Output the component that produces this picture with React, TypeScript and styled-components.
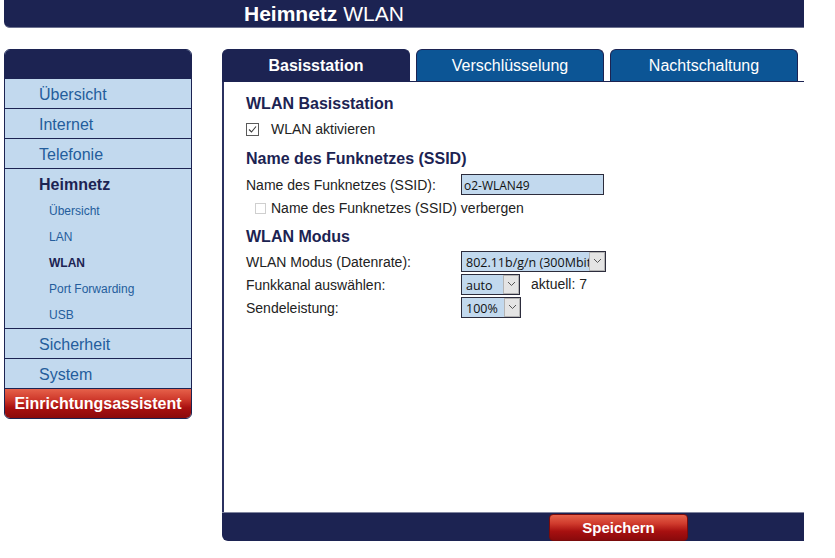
import React from 'react'
import styled, { createGlobalStyle } from 'styled-components'

const navy = '#1c2352'
const paleBlue = '#c2d9ee'
const linkBlue = '#245d9c'

const GlobalStyle = createGlobalStyle`
    html, body {
        margin: 0;
        padding: 0;
        background: #ffffff;
        font-family: "Liberation Sans", Arial, sans-serif;
    }
`

const Page = styled.div`
    width: 835px;
    height: 558px;
    padding-left: 4px;
    box-sizing: border-box;
    overflow: hidden;
`

const Header = styled.header`
    width: 800px;
    height: 28px;
    background: ${navy};
    border-bottom: 1px solid #6d7290;
    border-bottom-left-radius: 6px;
    box-sizing: border-box;
    padding-left: 240px;
    color: #ffffff;
    font-size: 21px;
    line-height: 28px;
    b {
        font-weight: bold;
    }
`

const Body = styled.div`
    display: flex;
    gap: 30px;
    margin-top: 21px;
`

const Sidebar = styled.nav`
    width: 188px;
    box-sizing: border-box;
    border: 1px solid ${navy};
    border-radius: 6px;
    overflow: hidden;
    background: ${paleBlue};
    align-self: flex-start;
`

const SidebarTop = styled.div`
    height: 29px;
    background: ${navy};
`

const NavItem = styled.div<{ $active?: boolean }>`
    height: 29px;
    line-height: 31px;
    padding-left: 34px;
    border-bottom: 1px solid ${navy};
    font-size: 16px;
    color: ${(p) => (p.$active ? navy : linkBlue)};
    font-weight: ${(p) => (p.$active ? 'bold' : 'normal')};
`

const NavGroup = styled.div`
    border-bottom: 1px solid ${navy};
`

const NavGroupTitle = styled.div`
    height: 29px;
    line-height: 31px;
    padding-left: 34px;
    font-size: 16px;
    font-weight: bold;
    color: ${navy};
`

const SubItem = styled.div<{ $active?: boolean }>`
    height: 26px;
    line-height: 26px;
    padding-left: 44px;
    font-size: 12px;
    color: ${(p) => (p.$active ? navy : linkBlue)};
    font-weight: ${(p) => (p.$active ? 'bold' : 'normal')};
`

const WizardItem = styled.div`
    height: 29px;
    line-height: 29px;
    text-align: center;
    font-size: 16px;
    font-weight: bold;
    color: #ffffff;
    background: linear-gradient(#e6614a 0%, #cf3a2c 35%, #a81010 65%, #8a0a0c 100%);
`

const Main = styled.main`
    width: 582px;
    display: flex;
    flex-direction: column;
`

const TabBar = styled.div`
    display: flex;
    gap: 6px;
    border-bottom: 1px solid ${navy};
`

const Tab = styled.div<{ $active?: boolean }>`
    width: 188px;
    height: 32px;
    box-sizing: border-box;
    border: 1px solid ${navy};
    border-bottom: none;
    border-radius: 6px 6px 0 0;
    background: ${(p) => (p.$active ? navy : '#0c5595')};
    color: #ffffff;
    font-size: 16px;
    font-weight: ${(p) => (p.$active ? 'bold' : 'normal')};
    text-align: center;
    line-height: 32px;
`

const Panel = styled.section`
    height: 430px;
    box-sizing: border-box;
    border-left: 2px solid #2b3160;
    padding: 10px 0 0 22px;
    color: #222222;
    font-size: 14px;
`

const Heading = styled.h2<{ $gap?: number }>`
    margin: ${(p) => p.$gap ?? 0}px 0 0 0;
    height: 24px;
    line-height: 24px;
    font-size: 16px;
    font-weight: bold;
    color: ${navy};
`

const CheckRow = styled.label<{ $height?: number; $indent?: number }>`
    display: flex;
    align-items: center;
    height: ${(p) => p.$height ?? 24}px;
    padding-left: ${(p) => p.$indent ?? 0}px;
    padding-top: 1px;
`

const Box = styled.span<{ $disabled?: boolean }>`
    display: inline-flex;
    align-items: center;
    justify-content: center;
    width: ${(p) => (p.$disabled ? 11 : 13)}px;
    height: ${(p) => (p.$disabled ? 11 : 13)}px;
    box-sizing: border-box;
    border: 1px solid ${(p) => (p.$disabled ? '#cfcfcf' : '#5a5a5a')};
    background: #ffffff;
    margin-right: ${(p) => (p.$disabled ? 5 : 12)}px;
    color: #3a3a3a;
`

const Form = styled.div`
    display: grid;
    grid-template-columns: 215px auto;
    align-items: center;
`

const FieldLabel = styled.div<{ $height?: number }>`
    height: ${(p) => p.$height ?? 23}px;
    line-height: ${(p) => (p.$height ?? 23) + 3}px;
`

const Field = styled.div`
    display: flex;
    align-items: center;
    gap: 11px;
    padding-top: 1px;
`

const TextInput = styled.div`
    width: 143px;
    height: 21px;
    box-sizing: border-box;
    border: 1px solid #2c2c3c;
    background: ${paleBlue};
    padding: 3px 0 0 2px;
    font-family: "Open Sans", "Liberation Sans", sans-serif;
    font-size: 12px;
    line-height: 16px;
    color: #111111;
`

const Select = styled.div<{ $width: number }>`
    display: flex;
    width: ${(p) => p.$width}px;
    height: 21px;
    box-sizing: border-box;
    border: 1px solid #2c2c3c;
    background: ${paleBlue};
`

const SelectValue = styled.span`
    flex: 1;
    overflow: hidden;
    white-space: nowrap;
    padding: 3px 0 0 4px;
    font-family: "Open Sans", "Liberation Sans", sans-serif;
    font-size: 12.5px;
    line-height: 16px;
    color: #111111;
`

const SelectArrow = styled.span`
    display: flex;
    align-items: center;
    justify-content: center;
    width: 16px;
    box-sizing: border-box;
    border: 1px solid #b4b4b4;
    background: #e4e4e4;
    color: #555555;
`

const Footer = styled.footer`
    height: 29px;
    box-sizing: border-box;
    background: ${navy};
    border-top: 1px solid #80859f;
    border-bottom-left-radius: 6px;
    display: flex;
    align-items: center;
    padding-left: 327px;
`

const SaveButton = styled.button`
    width: 139px;
    height: 27px;
    border: 1px solid #7a0b0b;
    border-radius: 4px;
    background: linear-gradient(#e6614a 0%, #cf3a2c 35%, #a81010 65%, #8a0a0c 100%);
    color: #ffffff;
    font-family: "Liberation Sans", Arial, sans-serif;
    font-size: 15px;
    font-weight: bold;
    padding: 0;
`

const Chevron = () => (
    <svg width="9" height="6" viewBox="0 0 9 6" fill="none" stroke="currentColor" strokeWidth="1">
        <path d="M1 1L4.5 4.5L8 1" />
    </svg>
)

const Check = () => (
    <svg width="11" height="11" viewBox="0 0 11 11" fill="none" stroke="currentColor" strokeWidth="1.1">
        <path d="M2 5.5L4.5 8L9 2.5" />
    </svg>
)

const DropDown = ({ width, value }: { width: number; value: string }) => (
    <Select $width={width}>
        <SelectValue>{value}</SelectValue>
        <SelectArrow>
            <Chevron />
        </SelectArrow>
    </Select>
)

const topItems = ['Übersicht', 'Internet', 'Telefonie']
const subItems = ['Übersicht', 'LAN', 'WLAN', 'Port Forwarding', 'USB']
const tabs = ['Basisstation', 'Verschlüsselung', 'Nachtschaltung']

export default function App() {
    return (
        <>
            <GlobalStyle />
            <Page>
                <Header>
                    <b>Heimnetz</b> WLAN
                </Header>
                <Body>
                    <Sidebar>
                        <SidebarTop />
                        {topItems.map((t) => (
                            <NavItem key={t}>{t}</NavItem>
                        ))}
                        <NavGroup>
                            <NavGroupTitle>Heimnetz</NavGroupTitle>
                            {subItems.map((s) => (
                                <SubItem key={s} $active={s === 'WLAN'}>
                                    {s}
                                </SubItem>
                            ))}
                        </NavGroup>
                        <NavItem>Sicherheit</NavItem>
                        <NavItem>System</NavItem>
                        <WizardItem>Einrichtungsassistent</WizardItem>
                    </Sidebar>
                    <Main>
                        <TabBar>
                            {tabs.map((t, i) => (
                                <Tab key={t} $active={i === 0}>
                                    {t}
                                </Tab>
                            ))}
                        </TabBar>
                        <Panel>
                            <Heading>WLAN Basisstation</Heading>
                            <CheckRow>
                                <Box>
                                    <Check />
                                </Box>
                                WLAN aktivieren
                            </CheckRow>
                            <Heading $gap={6}>Name des Funknetzes (SSID)</Heading>
                            <Form>
                                <FieldLabel $height={25}>Name des Funknetzes (SSID):</FieldLabel>
                                <Field>
                                    <TextInput>o2-WLAN49</TextInput>
                                </Field>
                            </Form>
                            <CheckRow $height={22} $indent={9}>
                                <Box $disabled />
                                Name des Funknetzes (SSID) verbergen
                            </CheckRow>
                            <Heading $gap={6}>WLAN Modus</Heading>
                            <Form>
                                <FieldLabel>WLAN Modus (Datenrate):</FieldLabel>
                                <Field>
                                    <DropDown width={145} value="802.11b/g/n (300Mbit/s)" />
                                </Field>
                                <FieldLabel>Funkkanal auswählen:</FieldLabel>
                                <Field>
                                    <DropDown width={59} value="auto" />
                                    aktuell: 7
                                </Field>
                                <FieldLabel>Sendeleistung:</FieldLabel>
                                <Field>
                                    <DropDown width={60} value="100%" />
                                </Field>
                            </Form>
                        </Panel>
                        <Footer>
                            <SaveButton>Speichern</SaveButton>
                        </Footer>
                    </Main>
                </Body>
            </Page>
        </>
    )
}
